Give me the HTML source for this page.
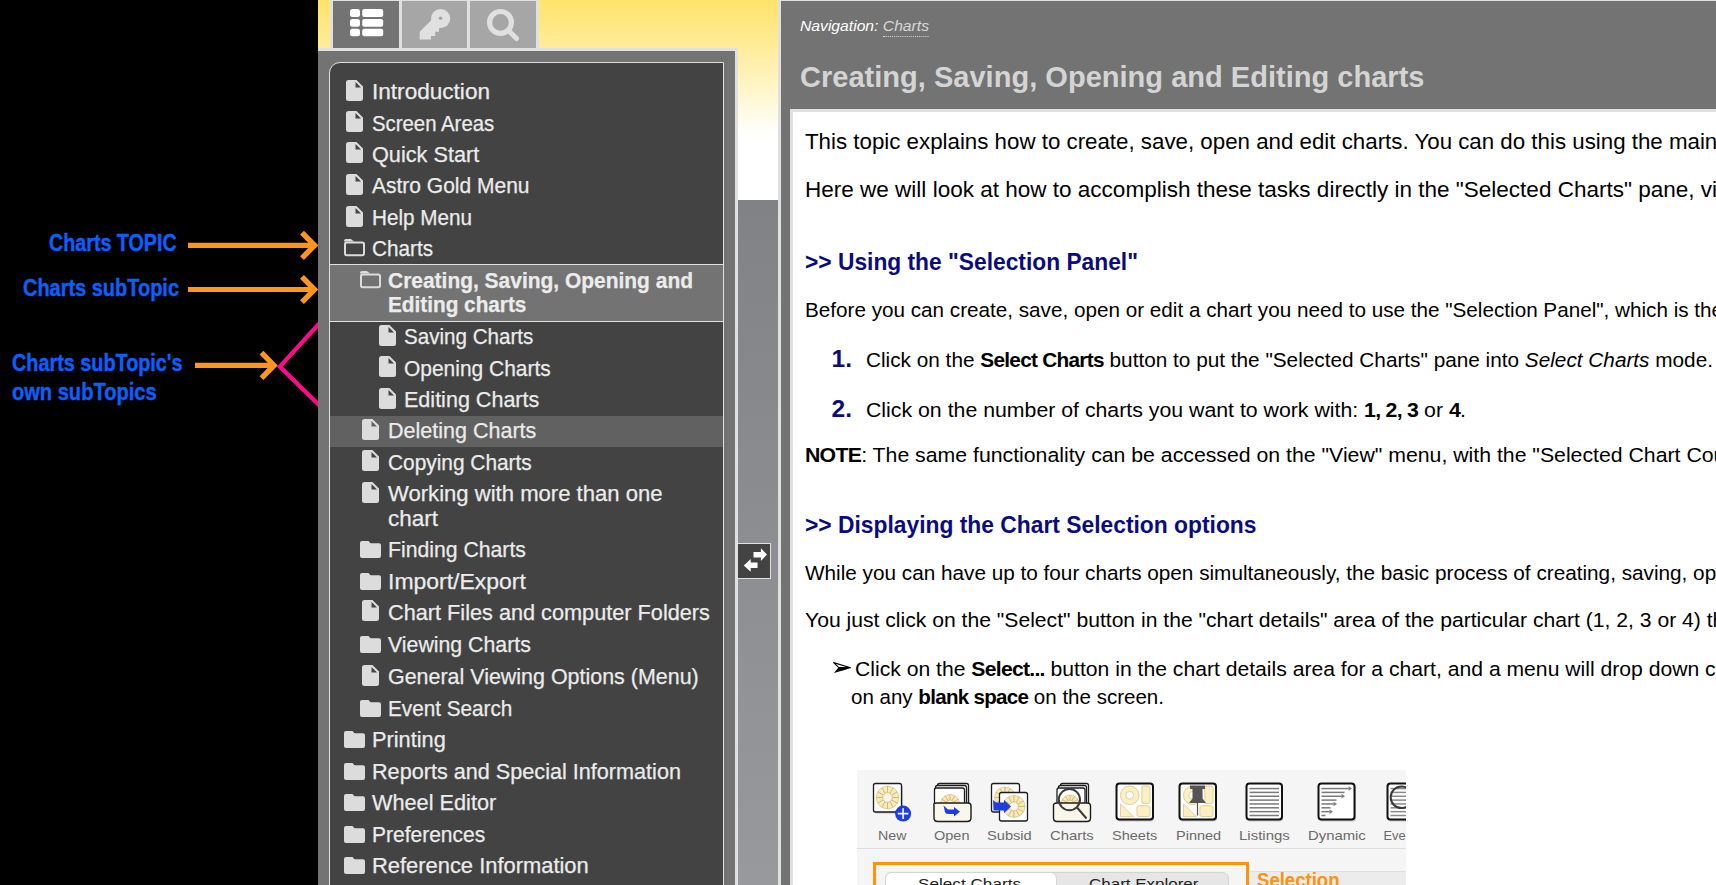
<!DOCTYPE html><html><head><meta charset="utf-8"><style>
html,body{margin:0;padding:0}
body{width:1716px;height:885px;overflow:hidden;background:#000;position:relative;font-family:"Liberation Sans", sans-serif}
.t{position:absolute;white-space:nowrap;transform-origin:0 0}
i.m{display:inline-block;width:0;height:0}
b{letter-spacing:-0.7px}
</style></head><body>

<div style="position:absolute;left:318px;top:0px;width:460px;height:200px;background:linear-gradient(to bottom,#ffe36b 0px,#ffeb94 42px,#fff5c8 88px,#fffdf3 125px,#fff 142px)"></div>
<div style="position:absolute;left:738px;top:200px;width:40px;height:685px;background:linear-gradient(to bottom,#818286,#98999d)"></div>
<div style="position:absolute;left:318px;top:48px;width:417px;height:837px;background:#737373;border-top:3px solid #e0e0e0;border-right:3px solid #e0e0e0"></div>
<div style="position:absolute;left:330px;top:0px;width:209px;height:48px;background:#e0e0e0"></div>
<div style="position:absolute;left:333px;top:1px;width:66px;height:47px;background:#737373"></div>
<div style="position:absolute;left:402px;top:1px;width:65px;height:47px;background:#a6a6a6"></div>
<div style="position:absolute;left:470px;top:1px;width:66px;height:47px;background:#a6a6a6"></div>
<div style="position:absolute;left:329px;top:62px;width:393px;height:830px;background:#434343;border:1px solid #e0e0e0;border-top-left-radius:11px"></div>
<div style="position:absolute;left:330px;top:264px;width:393px;height:56px;background:#737373;border-top:1px solid #e0e0e0;border-bottom:1px solid #e0e0e0"></div>
<div style="position:absolute;left:330px;top:416px;width:393px;height:31px;background:#616161"></div>
<div style="position:absolute;left:778px;top:0px;width:1000px;height:885px;background:#737373;border-left:3px solid #e0e0e0;border-top:1px solid #e0e0e0;box-sizing:border-box"></div>
<div style="position:absolute;left:790px;top:109px;width:1000px;height:800px;background:#fff;border-left:3px solid #e0e0e0;border-top:3px solid #e0e0e0;box-sizing:border-box"></div>
<svg style="position:absolute;left:346px;top:80px" width="17" height="21" viewBox="0 0 17 21"><path d="M2.5 0 H10.5 L17 6.5 V18.5 A2.5 2.5 0 0 1 14.5 21 H2.5 A2.5 2.5 0 0 1 0 18.5 V2.5 A2.5 2.5 0 0 1 2.5 0Z" fill="#dcdcdc"/><path d="M9.5 2 L15 7.5 H9.5Z" fill="#434343"/></svg>
<svg style="position:absolute;left:346px;top:111px" width="17" height="21" viewBox="0 0 17 21"><path d="M2.5 0 H10.5 L17 6.5 V18.5 A2.5 2.5 0 0 1 14.5 21 H2.5 A2.5 2.5 0 0 1 0 18.5 V2.5 A2.5 2.5 0 0 1 2.5 0Z" fill="#dcdcdc"/><path d="M9.5 2 L15 7.5 H9.5Z" fill="#434343"/></svg>
<svg style="position:absolute;left:346px;top:142px" width="17" height="21" viewBox="0 0 17 21"><path d="M2.5 0 H10.5 L17 6.5 V18.5 A2.5 2.5 0 0 1 14.5 21 H2.5 A2.5 2.5 0 0 1 0 18.5 V2.5 A2.5 2.5 0 0 1 2.5 0Z" fill="#dcdcdc"/><path d="M9.5 2 L15 7.5 H9.5Z" fill="#434343"/></svg>
<svg style="position:absolute;left:346px;top:174px" width="17" height="21" viewBox="0 0 17 21"><path d="M2.5 0 H10.5 L17 6.5 V18.5 A2.5 2.5 0 0 1 14.5 21 H2.5 A2.5 2.5 0 0 1 0 18.5 V2.5 A2.5 2.5 0 0 1 2.5 0Z" fill="#dcdcdc"/><path d="M9.5 2 L15 7.5 H9.5Z" fill="#434343"/></svg>
<svg style="position:absolute;left:346px;top:206px" width="17" height="21" viewBox="0 0 17 21"><path d="M2.5 0 H10.5 L17 6.5 V18.5 A2.5 2.5 0 0 1 14.5 21 H2.5 A2.5 2.5 0 0 1 0 18.5 V2.5 A2.5 2.5 0 0 1 2.5 0Z" fill="#dcdcdc"/><path d="M9.5 2 L15 7.5 H9.5Z" fill="#434343"/></svg>
<svg style="position:absolute;left:344px;top:239px" width="21" height="18" viewBox="0 0 21 18"><path d="M0 2.6 V2 Q0 0 2 0 H6.8 L10.2 2.6 Z" fill="#dcdcdc"/><rect x="1" y="3.5" width="19" height="12.8" rx="1.8" fill="none" stroke="#dcdcdc" stroke-width="2"/></svg>
<svg style="position:absolute;left:360px;top:271px" width="21" height="18" viewBox="0 0 21 18"><path d="M0 2.6 V2 Q0 0 2 0 H6.8 L10.2 2.6 Z" fill="#dcdcdc"/><rect x="1" y="3.5" width="19" height="12.8" rx="1.8" fill="none" stroke="#dcdcdc" stroke-width="2"/></svg>
<svg style="position:absolute;left:379px;top:325px" width="17" height="21" viewBox="0 0 17 21"><path d="M2.5 0 H10.5 L17 6.5 V18.5 A2.5 2.5 0 0 1 14.5 21 H2.5 A2.5 2.5 0 0 1 0 18.5 V2.5 A2.5 2.5 0 0 1 2.5 0Z" fill="#dcdcdc"/><path d="M9.5 2 L15 7.5 H9.5Z" fill="#434343"/></svg>
<svg style="position:absolute;left:379px;top:356px" width="17" height="21" viewBox="0 0 17 21"><path d="M2.5 0 H10.5 L17 6.5 V18.5 A2.5 2.5 0 0 1 14.5 21 H2.5 A2.5 2.5 0 0 1 0 18.5 V2.5 A2.5 2.5 0 0 1 2.5 0Z" fill="#dcdcdc"/><path d="M9.5 2 L15 7.5 H9.5Z" fill="#434343"/></svg>
<svg style="position:absolute;left:379px;top:388px" width="17" height="21" viewBox="0 0 17 21"><path d="M2.5 0 H10.5 L17 6.5 V18.5 A2.5 2.5 0 0 1 14.5 21 H2.5 A2.5 2.5 0 0 1 0 18.5 V2.5 A2.5 2.5 0 0 1 2.5 0Z" fill="#dcdcdc"/><path d="M9.5 2 L15 7.5 H9.5Z" fill="#434343"/></svg>
<svg style="position:absolute;left:362px;top:419px" width="17" height="21" viewBox="0 0 17 21"><path d="M2.5 0 H10.5 L17 6.5 V18.5 A2.5 2.5 0 0 1 14.5 21 H2.5 A2.5 2.5 0 0 1 0 18.5 V2.5 A2.5 2.5 0 0 1 2.5 0Z" fill="#dcdcdc"/><path d="M9.5 2 L15 7.5 H9.5Z" fill="#616161"/></svg>
<svg style="position:absolute;left:362px;top:450px" width="17" height="21" viewBox="0 0 17 21"><path d="M2.5 0 H10.5 L17 6.5 V18.5 A2.5 2.5 0 0 1 14.5 21 H2.5 A2.5 2.5 0 0 1 0 18.5 V2.5 A2.5 2.5 0 0 1 2.5 0Z" fill="#dcdcdc"/><path d="M9.5 2 L15 7.5 H9.5Z" fill="#434343"/></svg>
<svg style="position:absolute;left:362px;top:482px" width="17" height="21" viewBox="0 0 17 21"><path d="M2.5 0 H10.5 L17 6.5 V18.5 A2.5 2.5 0 0 1 14.5 21 H2.5 A2.5 2.5 0 0 1 0 18.5 V2.5 A2.5 2.5 0 0 1 2.5 0Z" fill="#dcdcdc"/><path d="M9.5 2 L15 7.5 H9.5Z" fill="#434343"/></svg>
<svg style="position:absolute;left:360px;top:541px" width="21" height="17" viewBox="0 0 21 17"><path d="M2 0 H8.5 L10.5 2.2 H19 A2 2 0 0 1 21 4.2 V15 A2 2 0 0 1 19 17 H2 A2 2 0 0 1 0 15 V2 A2 2 0 0 1 2 0Z" fill="#dcdcdc"/></svg>
<svg style="position:absolute;left:360px;top:573px" width="21" height="17" viewBox="0 0 21 17"><path d="M2 0 H8.5 L10.5 2.2 H19 A2 2 0 0 1 21 4.2 V15 A2 2 0 0 1 19 17 H2 A2 2 0 0 1 0 15 V2 A2 2 0 0 1 2 0Z" fill="#dcdcdc"/></svg>
<svg style="position:absolute;left:362px;top:600px" width="17" height="21" viewBox="0 0 17 21"><path d="M2.5 0 H10.5 L17 6.5 V18.5 A2.5 2.5 0 0 1 14.5 21 H2.5 A2.5 2.5 0 0 1 0 18.5 V2.5 A2.5 2.5 0 0 1 2.5 0Z" fill="#dcdcdc"/><path d="M9.5 2 L15 7.5 H9.5Z" fill="#434343"/></svg>
<svg style="position:absolute;left:360px;top:636px" width="21" height="17" viewBox="0 0 21 17"><path d="M2 0 H8.5 L10.5 2.2 H19 A2 2 0 0 1 21 4.2 V15 A2 2 0 0 1 19 17 H2 A2 2 0 0 1 0 15 V2 A2 2 0 0 1 2 0Z" fill="#dcdcdc"/></svg>
<svg style="position:absolute;left:362px;top:665px" width="17" height="21" viewBox="0 0 17 21"><path d="M2.5 0 H10.5 L17 6.5 V18.5 A2.5 2.5 0 0 1 14.5 21 H2.5 A2.5 2.5 0 0 1 0 18.5 V2.5 A2.5 2.5 0 0 1 2.5 0Z" fill="#dcdcdc"/><path d="M9.5 2 L15 7.5 H9.5Z" fill="#434343"/></svg>
<svg style="position:absolute;left:360px;top:700px" width="21" height="17" viewBox="0 0 21 17"><path d="M2 0 H8.5 L10.5 2.2 H19 A2 2 0 0 1 21 4.2 V15 A2 2 0 0 1 19 17 H2 A2 2 0 0 1 0 15 V2 A2 2 0 0 1 2 0Z" fill="#dcdcdc"/></svg>
<svg style="position:absolute;left:344px;top:731px" width="21" height="17" viewBox="0 0 21 17"><path d="M2 0 H8.5 L10.5 2.2 H19 A2 2 0 0 1 21 4.2 V15 A2 2 0 0 1 19 17 H2 A2 2 0 0 1 0 15 V2 A2 2 0 0 1 2 0Z" fill="#dcdcdc"/></svg>
<svg style="position:absolute;left:344px;top:763px" width="21" height="17" viewBox="0 0 21 17"><path d="M2 0 H8.5 L10.5 2.2 H19 A2 2 0 0 1 21 4.2 V15 A2 2 0 0 1 19 17 H2 A2 2 0 0 1 0 15 V2 A2 2 0 0 1 2 0Z" fill="#dcdcdc"/></svg>
<svg style="position:absolute;left:344px;top:794px" width="21" height="17" viewBox="0 0 21 17"><path d="M2 0 H8.5 L10.5 2.2 H19 A2 2 0 0 1 21 4.2 V15 A2 2 0 0 1 19 17 H2 A2 2 0 0 1 0 15 V2 A2 2 0 0 1 2 0Z" fill="#dcdcdc"/></svg>
<svg style="position:absolute;left:344px;top:826px" width="21" height="17" viewBox="0 0 21 17"><path d="M2 0 H8.5 L10.5 2.2 H19 A2 2 0 0 1 21 4.2 V15 A2 2 0 0 1 19 17 H2 A2 2 0 0 1 0 15 V2 A2 2 0 0 1 2 0Z" fill="#dcdcdc"/></svg>
<svg style="position:absolute;left:344px;top:857px" width="21" height="17" viewBox="0 0 21 17"><path d="M2 0 H8.5 L10.5 2.2 H19 A2 2 0 0 1 21 4.2 V15 A2 2 0 0 1 19 17 H2 A2 2 0 0 1 0 15 V2 A2 2 0 0 1 2 0Z" fill="#dcdcdc"/></svg>
<div class="t" id="n0_0" style="left:372.0px;top:78.30px;font-size:22.5px;line-height:27px;color:#ececec;-webkit-text-stroke:0.25px #ececec;transform:scaleX(1.0036);">Introduction</div>
<div class="t" id="n1_0" style="left:372.0px;top:109.60px;font-size:22.5px;line-height:27px;color:#ececec;-webkit-text-stroke:0.25px #ececec;transform:scaleX(0.9047);">Screen Areas</div>
<div class="t" id="n2_0" style="left:372.0px;top:140.80px;font-size:22.5px;line-height:27px;color:#ececec;-webkit-text-stroke:0.25px #ececec;transform:scaleX(0.9633);">Quick Start</div>
<div class="t" id="n3_0" style="left:372.0px;top:172.30px;font-size:22.5px;line-height:27px;color:#ececec;-webkit-text-stroke:0.25px #ececec;transform:scaleX(0.9329);">Astro Gold Menu</div>
<div class="t" id="n4_0" style="left:372.0px;top:203.90px;font-size:22.5px;line-height:27px;color:#ececec;-webkit-text-stroke:0.25px #ececec;transform:scaleX(0.9190);">Help Menu</div>
<div class="t" id="n5_0" style="left:372.0px;top:235.10px;font-size:22.5px;line-height:27px;color:#ececec;-webkit-text-stroke:0.25px #ececec;transform:scaleX(0.9203);">Charts</div>
<div class="t" id="n6_0" style="left:388.0px;top:267.68px;font-size:22px;line-height:26px;color:#ececec;-webkit-text-stroke:0.25px #ececec;font-weight:bold;transform:scaleX(0.9523);">Creating, Saving, Opening and</div>
<div class="t" id="n6_1" style="left:388.0px;top:291.98px;font-size:22px;line-height:26px;color:#ececec;-webkit-text-stroke:0.25px #ececec;font-weight:bold;transform:scaleX(0.9435);">Editing charts</div>
<div class="t" id="n7_0" style="left:404.0px;top:322.90px;font-size:22.5px;line-height:27px;color:#ececec;-webkit-text-stroke:0.25px #ececec;transform:scaleX(0.9149);">Saving Charts</div>
<div class="t" id="n8_0" style="left:404.0px;top:354.80px;font-size:22.5px;line-height:27px;color:#ececec;-webkit-text-stroke:0.25px #ececec;transform:scaleX(0.9309);">Opening Charts</div>
<div class="t" id="n9_0" style="left:404.0px;top:385.80px;font-size:22.5px;line-height:27px;color:#ececec;-webkit-text-stroke:0.25px #ececec;transform:scaleX(0.9573);">Editing Charts</div>
<div class="t" id="n10_0" style="left:388.0px;top:416.90px;font-size:22.5px;line-height:27px;color:#ececec;-webkit-text-stroke:0.25px #ececec;transform:scaleX(0.9563);">Deleting Charts</div>
<div class="t" id="n11_0" style="left:388.0px;top:448.60px;font-size:22.5px;line-height:27px;color:#ececec;-webkit-text-stroke:0.25px #ececec;transform:scaleX(0.9273);">Copying Charts</div>
<div class="t" id="n12_0" style="left:388.0px;top:480.20px;font-size:22.5px;line-height:27px;color:#ececec;-webkit-text-stroke:0.25px #ececec;transform:scaleX(0.9816);">Working with more than one</div>
<div class="t" id="n12_1" style="left:388.0px;top:505.10px;font-size:22.5px;line-height:27px;color:#ececec;-webkit-text-stroke:0.25px #ececec;">chart</div>
<div class="t" id="n13_0" style="left:388.0px;top:535.70px;font-size:22.5px;line-height:27px;color:#ececec;-webkit-text-stroke:0.25px #ececec;transform:scaleX(0.9424);">Finding Charts</div>
<div class="t" id="n14_0" style="left:388.0px;top:568.00px;font-size:22.5px;line-height:27px;color:#ececec;-webkit-text-stroke:0.25px #ececec;transform:scaleX(1.0211);">Import/Export</div>
<div class="t" id="n15_0" style="left:388.0px;top:598.80px;font-size:22.5px;line-height:27px;color:#ececec;-webkit-text-stroke:0.25px #ececec;transform:scaleX(0.9641);">Chart Files and computer Folders</div>
<div class="t" id="n16_0" style="left:388.0px;top:631.10px;font-size:22.5px;line-height:27px;color:#ececec;-webkit-text-stroke:0.25px #ececec;transform:scaleX(0.9462);">Viewing Charts</div>
<div class="t" id="n17_0" style="left:388.0px;top:662.90px;font-size:22.5px;line-height:27px;color:#ececec;-webkit-text-stroke:0.25px #ececec;transform:scaleX(0.9531);">General Viewing Options (Menu)</div>
<div class="t" id="n18_0" style="left:388.0px;top:694.70px;font-size:22.5px;line-height:27px;color:#ececec;-webkit-text-stroke:0.25px #ececec;transform:scaleX(0.9209);">Event Search</div>
<div class="t" id="n19_0" style="left:372.0px;top:725.70px;font-size:22.5px;line-height:27px;color:#ececec;-webkit-text-stroke:0.25px #ececec;transform:scaleX(0.9673);">Printing</div>
<div class="t" id="n20_0" style="left:372.0px;top:757.50px;font-size:22.5px;line-height:27px;color:#ececec;-webkit-text-stroke:0.25px #ececec;transform:scaleX(0.9613);">Reports and Special Information</div>
<div class="t" id="n21_0" style="left:372.0px;top:788.50px;font-size:22.5px;line-height:27px;color:#ececec;-webkit-text-stroke:0.25px #ececec;transform:scaleX(0.9642);">Wheel Editor</div>
<div class="t" id="n22_0" style="left:372.0px;top:820.50px;font-size:22.5px;line-height:27px;color:#ececec;-webkit-text-stroke:0.25px #ececec;transform:scaleX(0.9331);">Preferences</div>
<div class="t" id="n23_0" style="left:372.0px;top:851.50px;font-size:22.5px;line-height:27px;color:#ececec;-webkit-text-stroke:0.25px #ececec;transform:scaleX(0.9734);">Reference Information</div>
<div class="t" id="navl" style="left:800.0px;top:17.30px;font-size:15px;line-height:18px;font-style:italic;transform:scaleX(1.0453);"><span style="color:#fff">Navigation:</span> <span style="color:#d8d8d8;border-bottom:1px dotted #d8d8d8;padding-bottom:2px">Charts</span></div>
<div class="t" id="h1" style="left:799.5px;top:58.51px;font-size:30px;line-height:36px;color:#d4d4d4;font-weight:bold;transform:scaleX(0.9681);">Creating, Saving, Opening and Editing charts</div>
<div class="t" id="p1" style="left:805.0px;top:127.77px;font-size:22.3px;line-height:27px;color:#000;">This topic explains how to create, save, open and edit charts.<i class=m></i> You can do this using the main Astro Gold toolbar</div>
<div class="t" id="p2" style="left:805.0px;top:176.27px;font-size:22.3px;line-height:27px;color:#000;transform:scaleX(1.0099);">Here we will look at how to accomplish these tasks directly in the "Selected Charts" pane,<i class=m></i> via the toolbar</div>
<div class="t" id="h2a" style="left:805.0px;top:247.01px;font-size:24.5px;line-height:29px;color:#0b0b80;font-weight:bold;transform:scaleX(0.9297);">&gt;&gt; Using the "Selection Panel"</div>
<div class="t" id="p3" style="left:805.0px;top:297.20px;font-size:20.5px;line-height:25px;color:#000;transform:scaleX(1.0086);">Before you can create, save, open or edit a chart you need to use the "Selection Panel", which is<i class=m></i> the area</div>
<div class="t" id="n1" style="left:831.5px;top:343.51px;font-size:24.5px;line-height:29px;color:#0b0b80;font-weight:bold;">1.</div>
<div class="t" id="l1" style="left:866.0px;top:346.90px;font-size:20.5px;line-height:25px;color:#000;transform:scaleX(1.0129);">Click on the <b>Select Charts</b> button to put the "Selected Charts" pane into <i>Select Charts</i> mode.<i class=m></i></div>
<div class="t" id="n2" style="left:831.5px;top:393.71px;font-size:24.5px;line-height:29px;color:#0b0b80;font-weight:bold;">2.</div>
<div class="t" id="l2" style="left:866.0px;top:397.10px;font-size:20.5px;line-height:25px;color:#000;transform:scaleX(1.0384);">Click on the number of charts you want to work with: <b>1, 2, 3</b> or <b>4</b>.<i class=m></i></div>
<div class="t" id="note" style="left:805.0px;top:441.50px;font-size:20.5px;line-height:25px;color:#000;transform:scaleX(1.0368);"><b>NOTE</b>: The same functionality can be accessed on the "View" menu, with the "Selected Chart<i class=m></i> Count" option</div>
<div class="t" id="h2b" style="left:805.0px;top:509.51px;font-size:24.5px;line-height:29px;color:#0b0b80;font-weight:bold;transform:scaleX(0.9316);">&gt;&gt; Displaying the Chart Selection options</div>
<div class="t" id="p4" style="left:805.0px;top:560.20px;font-size:20.5px;line-height:25px;color:#000;transform:scaleX(1.0113);">While you can have up to four charts open simultaneously, the basic process of creating, saving,<i class=m></i> opening</div>
<div class="t" id="p5" style="left:805.0px;top:607.20px;font-size:20.5px;line-height:25px;color:#000;transform:scaleX(1.0305);">You just click on the "Select" button in the "chart details" area of the particular chart (1, 2, 3 or 4)<i class=m></i> that</div>
<div class="t" id="p6" style="left:855.3px;top:655.80px;font-size:20.5px;line-height:25px;color:#000;transform:scaleX(1.0311);">Click on the <b>Select...</b> button in the chart details area for a chart, and a menu will drop down<i class=m></i> containing</div>
<div class="t" id="p7" style="left:851.0px;top:683.80px;font-size:20.5px;line-height:25px;color:#000;transform:scaleX(1.0014);">on any <b>blank space</b> on the screen.<i class=m></i></div>
<div class="t" id="a1" style="left:48.6px;top:228.93px;font-size:23px;line-height:28px;color:#0c60ff;font-weight:bold;-webkit-text-stroke:0.35px #0c60ff;transform:scaleX(0.8564);">Charts TOPIC</div>
<div class="t" id="a2" style="left:22.6px;top:274.13px;font-size:23px;line-height:28px;color:#0c60ff;font-weight:bold;-webkit-text-stroke:0.35px #0c60ff;transform:scaleX(0.8678);">Charts subTopic</div>
<div class="t" id="a3" style="left:12.4px;top:348.73px;font-size:23px;line-height:28px;color:#0c60ff;font-weight:bold;-webkit-text-stroke:0.35px #0c60ff;transform:scaleX(0.8615);">Charts subTopic's</div>
<div class="t" id="a4" style="left:12.4px;top:377.73px;font-size:23px;line-height:28px;color:#0c60ff;font-weight:bold;-webkit-text-stroke:0.35px #0c60ff;transform:scaleX(0.8727);">own subTopics</div>
<div class="t" id="tl_New" style="left:877.6px;top:828.46px;font-size:12.8px;line-height:15px;color:#6a6a6a;z-index:2;transform:scaleX(1.1090);">New</div>
<div class="t" id="tl_Open" style="left:933.7px;top:828.46px;font-size:12.8px;line-height:15px;color:#6a6a6a;z-index:2;transform:scaleX(1.1337);">Open</div>
<div class="t" id="tl_Subsid" style="left:987.3px;top:828.46px;font-size:12.8px;line-height:15px;color:#6a6a6a;z-index:2;transform:scaleX(1.1420);">Subsid</div>
<div class="t" id="tl_Charts" style="left:1050.2px;top:828.46px;font-size:12.8px;line-height:15px;color:#6a6a6a;z-index:2;transform:scaleX(1.1617);">Charts</div>
<div class="t" id="tl_Sheets" style="left:1112.2px;top:828.46px;font-size:12.8px;line-height:15px;color:#6a6a6a;z-index:2;transform:scaleX(1.1344);">Sheets</div>
<div class="t" id="tl_Pinned" style="left:1175.8px;top:828.46px;font-size:12.8px;line-height:15px;color:#6a6a6a;z-index:2;transform:scaleX(1.1340);">Pinned</div>
<div class="t" id="tl_Listings" style="left:1239.2px;top:828.46px;font-size:12.8px;line-height:15px;color:#6a6a6a;z-index:2;transform:scaleX(1.1708);">Listings</div>
<div class="t" id="tl_Dynamic" style="left:1308.2px;top:828.46px;font-size:12.8px;line-height:15px;color:#6a6a6a;z-index:2;transform:scaleX(1.1611);">Dynamic</div>
<div class="t" id="tl_Eve" style="left:1383.5px;top:828.46px;font-size:12.8px;line-height:15px;color:#6a6a6a;z-index:2;clip-path:inset(0 0 0 0);">Events</div>
<div class="t" id="selc" style="left:918.4px;top:875.40px;font-size:15px;line-height:18px;color:#222;z-index:2;transform:scaleX(1.1438);">Select Charts</div>
<div class="t" id="chex" style="left:1088.6px;top:875.40px;font-size:15px;line-height:18px;color:#222;z-index:2;transform:scaleX(1.1313);">Chart Explorer</div>
<div class="t" id="sele" style="left:1256.5px;top:867.22px;font-size:21px;line-height:25px;color:#ff9207;font-weight:bold;z-index:2;transform:scaleX(0.8835);">Selection</div>
<svg style="position:absolute;left:330px;top:0" width="210" height="48" viewBox="330 0 210 48">
<g fill="#ffffff">
<rect x="350" y="9" width="10" height="8" rx="2.5"/><rect x="362.2" y="9" width="21" height="8" rx="2"/>
<rect x="350" y="18.9" width="10" height="7.9" rx="2.5"/><rect x="362.2" y="18.9" width="21" height="7.9" rx="2"/>
<rect x="350" y="28.8" width="10" height="7.4" rx="2.5"/><rect x="362.2" y="28.8" width="21" height="7.4" rx="2"/>
</g>
<g fill="#e0e0e0">
<circle cx="440.6" cy="18.5" r="9.6"/>
<path d="M419.7 31.7 L432.5 19 L443 27.5 L439 28.2 L439 31.7 L435.2 31.7 L435.2 35.9 L431 35.9 L431 39.6 L419.7 39.6 Z"/>
</g>
<circle cx="440.6" cy="18.2" r="1.8" fill="#a6a6a6"/>
<circle cx="500.5" cy="22.4" r="10.9" fill="none" stroke="#e0e0e0" stroke-width="5.2"/>
<path d="M508.5 30.5 L516.5 38.5" stroke="#e0e0e0" stroke-width="5" stroke-linecap="round"/>
</svg>
<svg style="position:absolute;left:0;top:0" width="318" height="885" viewBox="0 0 318 885"><path d="M188 245.4 H313.5" stroke="#fe961e" stroke-width="5.2" fill="none"/><path d="M302.0 232.70000000000002 L314.5 245.4 L302.0 258.1" stroke="#fe961e" stroke-width="5.4" fill="none" stroke-linejoin="miter" stroke-miterlimit="4"/><path d="M188 289.5 H313.5" stroke="#fe961e" stroke-width="5.2" fill="none"/><path d="M302.0 276.8 L314.5 289.5 L302.0 302.2" stroke="#fe961e" stroke-width="5.4" fill="none" stroke-linejoin="miter" stroke-miterlimit="4"/><path d="M195 365.4 H273.0" stroke="#fe961e" stroke-width="5.2" fill="none"/><path d="M261.5 352.7 L274.0 365.4 L261.5 378.09999999999997" stroke="#fe961e" stroke-width="5.4" fill="none" stroke-linejoin="miter" stroke-miterlimit="4"/><path d="M320 322.8 L279.8 366.6 L320 406" stroke="#ff0a8c" stroke-width="4.2" fill="none"/></svg>
<svg style="position:absolute;left:828px;top:655px" width="30" height="25" viewBox="828 655 30 25"><path d="M833.9 672.9 L838.4 667.4 Q845 667.2 850.8 667.7 Q845 670 833.9 672.9Z" fill="#000"/><path d="M833.6 662.6 L850.6 667.7 L838.6 667.4 Z" fill="none" stroke="#000" stroke-width="1.1" stroke-linejoin="round"/></svg>
<div style="position:absolute;left:738px;top:543px;width:32px;height:34px;background:#434343;border:1px solid #e0e0e0;border-left:none"></div>
<svg style="position:absolute;left:738px;top:543px" width="34" height="36" viewBox="738 543 34 36">
<path d="M753.5 551.9 H760.9 V548.3 L767 554.6 L760.9 560.9 V557.6 H753.5 Z" fill="#fff"/>
<path d="M757.5 562.5 H750.7 V559 L743.8 565.4 L750.7 571.8 V568 H757.5 Z" fill="#fff"/>
</svg>
<svg style="position:absolute;left:857px;top:770px" width="549" height="115" viewBox="857 770 549 115"><defs><clipPath id="tbc"><rect x="857" y="770" width="549" height="115"/></clipPath></defs><g clip-path="url(#tbc)"><rect x="857" y="770" width="549" height="115" fill="#f5f5f5"/><rect x="857" y="848" width="549" height="1" fill="#dedede"/><rect x="874" y="784.5" width="29" height="29" rx="3" fill="#000" opacity="0.18"/><rect x="1117" y="784.5" width="37" height="37" rx="3" fill="#000" opacity="0.18"/><rect x="1180" y="784.5" width="37" height="37" rx="3" fill="#000" opacity="0.18"/><rect x="1247" y="784.5" width="36" height="37" rx="3" fill="#000" opacity="0.18"/><rect x="1319" y="784.5" width="37" height="37" rx="3" fill="#000" opacity="0.18"/><rect x="1388" y="784.5" width="37" height="37" rx="3" fill="#000" opacity="0.18"/><rect x="873.5" y="783.5" width="28" height="28.5" rx="2" fill="#fff" stroke="#1c1c1c" stroke-width="1.3"/><circle cx="887.5" cy="797.5" r="11.3" fill="#f8ebb8" stroke="#cdb57a" stroke-width="0.6"/><path d="M892.30 797.50 L898.80 797.50 M891.66 799.90 L897.29 803.15 M889.90 801.66 L893.15 807.29 M887.50 802.30 L887.50 808.80 M885.10 801.66 L881.85 807.29 M883.34 799.90 L877.71 803.15 M882.70 797.50 L876.20 797.50 M883.34 795.10 L877.71 791.85 M885.10 793.34 L881.85 787.71 M887.50 792.70 L887.50 786.20 M889.90 793.34 L893.15 787.71 M891.66 795.10 L897.29 791.85 " stroke="#c0a062" stroke-width="0.7"/><circle cx="887.5" cy="797.5" r="4.8" fill="#faf5e8" stroke="#c8a860" stroke-width="0.6"/><circle cx="903.1" cy="813.6" r="8" fill="#1d3ee0"/><path d="M903.1 808.3 V818.9 M897.8 813.6 H908.4" stroke="#fff" stroke-width="1.6"/><rect x="937.5" y="783.5" width="31" height="28" rx="2" fill="#fff" stroke="#1c1c1c" stroke-width="1.3"/><rect x="935.5" y="785.5" width="31" height="28" rx="2" fill="#fff" stroke="#1c1c1c" stroke-width="1.3"/><rect x="934.5" y="788" width="30" height="26" rx="2" fill="#fff" stroke="#1c1c1c" stroke-width="1.3"/><circle cx="950" cy="804" r="9.5" fill="#f8ebb8" stroke="#cdb57a" stroke-width="0.6"/><path d="M954.00 804.00 L959.50 804.00 M953.46 806.00 L958.23 808.75 M952.00 807.46 L954.75 812.23 M950.00 808.00 L950.00 813.50 M948.00 807.46 L945.25 812.23 M946.54 806.00 L941.77 808.75 M946.00 804.00 L940.50 804.00 M946.54 802.00 L941.77 799.25 M948.00 800.54 L945.25 795.77 M950.00 800.00 L950.00 794.50 M952.00 800.54 L954.75 795.77 M953.46 802.00 L958.23 799.25 " stroke="#c0a062" stroke-width="0.7"/><circle cx="950" cy="804" r="4" fill="#faf5e8" stroke="#c8a860" stroke-width="0.6"/><path d="M934 805 Q933 803 937 803 H968 Q971 803 971 806 V818 Q971 821.5 967 821.5 H938 Q934 821.5 934 818 Z" fill="#faf6ea" stroke="#1c1c1c" stroke-width="1.4"/><path d="M943.5 805.5 L945 812 Q945.5 814 948 814 H954 V816.5 L960 811.8 L954 807 V809.5 H948 Z" fill="#1d3ee0"/><rect x="991.5" y="783.5" width="28" height="28.5" rx="2" fill="#fff" stroke="#1c1c1c" stroke-width="1.3"/><circle cx="1005" cy="797.5" r="10.5" fill="#f8ebb8" stroke="#cdb57a" stroke-width="0.6"/><path d="M1009.50 797.50 L1015.50 797.50 M1008.90 799.75 L1014.09 802.75 M1007.25 801.40 L1010.25 806.59 M1005.00 802.00 L1005.00 808.00 M1002.75 801.40 L999.75 806.59 M1001.10 799.75 L995.91 802.75 M1000.50 797.50 L994.50 797.50 M1001.10 795.25 L995.91 792.25 M1002.75 793.60 L999.75 788.41 M1005.00 793.00 L1005.00 787.00 M1007.25 793.60 L1010.25 788.41 M1008.90 795.25 L1014.09 792.25 " stroke="#c0a062" stroke-width="0.7"/><circle cx="1005" cy="797.5" r="4.5" fill="#faf5e8" stroke="#c8a860" stroke-width="0.6"/><rect x="999.5" y="792.5" width="28" height="28.5" rx="2" fill="#fff" stroke="#1c1c1c" stroke-width="1.3"/><circle cx="1013.9" cy="806.4" r="11" fill="#f8ebb8" stroke="#cdb57a" stroke-width="0.6"/><path d="M1018.40 806.40 L1024.90 806.40 M1017.80 808.65 L1023.43 811.90 M1016.15 810.30 L1019.40 815.93 M1013.90 810.90 L1013.90 817.40 M1011.65 810.30 L1008.40 815.93 M1010.00 808.65 L1004.37 811.90 M1009.40 806.40 L1002.90 806.40 M1010.00 804.15 L1004.37 800.90 M1011.65 802.50 L1008.40 796.87 M1013.90 801.90 L1013.90 795.40 M1016.15 802.50 L1019.40 796.87 M1017.80 804.15 L1023.43 800.90 " stroke="#c0a062" stroke-width="0.7"/><circle cx="1013.9" cy="806.4" r="4.5" fill="#faf5e8" stroke="#c8a860" stroke-width="0.6"/><path d="M993 800 L993.5 810.5 H1004 V813 L1011 806.5 L1004 800 V802.5 H996 Z" fill="#1d3ee0"/><rect x="1060.5" y="783.5" width="28" height="25" rx="2" fill="#fff" stroke="#1c1c1c" stroke-width="1.3"/><rect x="1058.5" y="785.5" width="28" height="25" rx="2" fill="#fff" stroke="#1c1c1c" stroke-width="1.3"/><rect x="1057" y="788" width="28" height="22" rx="2" fill="#fff" stroke="#1c1c1c" stroke-width="1.3"/><circle cx="1070" cy="804" r="9" fill="#f8ebb8" stroke="#cdb57a" stroke-width="0.6"/><path d="M1073.80 804.00 L1079.00 804.00 M1073.29 805.90 L1077.79 808.50 M1071.90 807.29 L1074.50 811.79 M1070.00 807.80 L1070.00 813.00 M1068.10 807.29 L1065.50 811.79 M1066.71 805.90 L1062.21 808.50 M1066.20 804.00 L1061.00 804.00 M1066.71 802.10 L1062.21 799.50 M1068.10 800.71 L1065.50 796.21 M1070.00 800.20 L1070.00 795.00 M1071.90 800.71 L1074.50 796.21 M1073.29 802.10 L1077.79 799.50 " stroke="#c0a062" stroke-width="0.7"/><circle cx="1070" cy="804" r="3.8" fill="#faf5e8" stroke="#c8a860" stroke-width="0.6"/><path d="M1053.5 806 Q1053 803 1057 803 H1087 Q1090.5 803 1090.5 806 V818 Q1090.5 821.5 1087 821.5 H1057 Q1053.5 821.5 1053.5 818 Z" fill="#faf6ea" stroke="#1c1c1c" stroke-width="1.4"/><circle cx="1069.4" cy="799.6" r="10.6" fill="none" stroke="#3a3a3a" stroke-width="2"/><path d="M1077 807.5 L1086.5 818.5" stroke="#3a3a3a" stroke-width="2"/><rect x="1116.5" y="783.5" width="36.5" height="36" rx="3" fill="#fff" stroke="#111" stroke-width="2"/><circle cx="1129.7" cy="795.3" r="6.6" fill="none" stroke="#fcf0c2" stroke-width="5.4"/><circle cx="1129.7" cy="795.3" r="3.9" fill="none" stroke="#d9c588" stroke-width="0.8"/><circle cx="1129.7" cy="795.3" r="9.3" fill="none" stroke="#d9c588" stroke-width="0.8"/><rect x="1141.9" y="786" width="8.1" height="17.4" rx="1" fill="#fcf0c2" stroke="#d9c588" stroke-width="0.8"/><path d="M1120.5 804 V816.7 H1133.5 Z" fill="#fcf0c2" stroke="#d9c588" stroke-width="0.8"/><rect x="1136.9" y="805.7" width="13.1" height="10.8" rx="2" fill="#fcf0c2" stroke="#d9c588" stroke-width="0.8"/><rect x="1179.5" y="783.5" width="36.5" height="36" rx="3" fill="#fff" stroke="#111" stroke-width="2"/><circle cx="1192.7" cy="795.3" r="6.6" fill="none" stroke="#fcf0c2" stroke-width="5.4"/><circle cx="1192.7" cy="795.3" r="3.9" fill="none" stroke="#d9c588" stroke-width="0.8"/><circle cx="1192.7" cy="795.3" r="9.3" fill="none" stroke="#d9c588" stroke-width="0.8"/><rect x="1204.9" y="786" width="8.1" height="17.4" rx="1" fill="#fcf0c2" stroke="#d9c588" stroke-width="0.8"/><path d="M1183.5 804 V816.7 H1196.5 Z" fill="#fcf0c2" stroke="#d9c588" stroke-width="0.8"/><rect x="1199.9" y="805.7" width="13.1" height="10.8" rx="2" fill="#fcf0c2" stroke="#d9c588" stroke-width="0.8"/><path d="M1190 785.5 H1205 V789 H1202.5 V798.5 L1206 803 H1189 L1192.5 798.5 V789 H1190 Z" fill="#555"/><path d="M1197.5 803 V815.5" stroke="#555" stroke-width="1.2"/><rect x="1246.5" y="783.5" width="35.5" height="36" rx="3" fill="#fff" stroke="#111" stroke-width="2"/><rect x="1249.5" y="787.80" width="29.5" height="1.5" fill="#7a7a7a"/><rect x="1249.5" y="791.65" width="29.5" height="1.5" fill="#7a7a7a"/><rect x="1249.5" y="795.50" width="29.5" height="1.5" fill="#7a7a7a"/><rect x="1249.5" y="799.35" width="29.5" height="1.5" fill="#7a7a7a"/><rect x="1249.5" y="803.20" width="29.5" height="1.5" fill="#7a7a7a"/><rect x="1249.5" y="807.05" width="29.5" height="1.5" fill="#7a7a7a"/><rect x="1249.5" y="810.90" width="29.5" height="1.5" fill="#7a7a7a"/><rect x="1249.5" y="814.75" width="29.5" height="1.5" fill="#7a7a7a"/><rect x="1318.5" y="783.5" width="36" height="36" rx="3" fill="#fff" stroke="#111" stroke-width="2"/><rect x="1321.5" y="787.80" width="27" height="1.5" fill="#7a7a7a"/><path d="M1348.5 786.3 L1352.0 788.55 L1348.5 790.8 Z" fill="#7a7a7a"/><rect x="1321.5" y="791.65" width="23" height="1.5" fill="#7a7a7a"/><rect x="1321.5" y="795.50" width="20" height="1.5" fill="#7a7a7a"/><path d="M1341.5 794.0 L1345.0 796.25 L1341.5 798.5 Z" fill="#7a7a7a"/><rect x="1321.5" y="799.35" width="15" height="1.5" fill="#7a7a7a"/><rect x="1321.5" y="803.20" width="12" height="1.5" fill="#7a7a7a"/><path d="M1333.5 801.6999999999999 L1337.0 803.9499999999999 L1333.5 806.1999999999999 Z" fill="#7a7a7a"/><rect x="1321.5" y="807.05" width="9" height="1.5" fill="#7a7a7a"/><rect x="1321.5" y="810.90" width="8" height="1.5" fill="#7a7a7a"/><path d="M1329.5 809.4 L1333.0 811.65 L1329.5 813.9 Z" fill="#7a7a7a"/><rect x="1321.5" y="814.75" width="4" height="1.5" fill="#7a7a7a"/><rect x="1387.5" y="783.5" width="36" height="36" rx="3" fill="#fff" stroke="#111" stroke-width="2"/><rect x="1390.5" y="787.80" width="20" height="1.5" fill="#8a8a8a"/><rect x="1390.5" y="791.65" width="20" height="1.5" fill="#8a8a8a"/><rect x="1390.5" y="795.50" width="20" height="1.5" fill="#8a8a8a"/><rect x="1390.5" y="799.35" width="20" height="1.5" fill="#8a8a8a"/><rect x="1390.5" y="803.20" width="20" height="1.5" fill="#8a8a8a"/><rect x="1390.5" y="807.05" width="20" height="1.5" fill="#8a8a8a"/><rect x="1390.5" y="810.90" width="20" height="1.5" fill="#8a8a8a"/><rect x="1390.5" y="814.75" width="20" height="1.5" fill="#8a8a8a"/><circle cx="1401.5" cy="797.3" r="10.8" fill="none" stroke="#3a3a3a" stroke-width="2"/><rect x="873" y="862" width="373" height="30" fill="none" stroke="#ff9207" stroke-width="3" transform="translate(1.5 1.5)"/><rect x="885.5" y="872.5" width="343" height="30" rx="6" fill="#e6e6e6" stroke="#d4d4d4" stroke-width="1"/><rect x="885.5" y="872.5" width="171" height="30" rx="6" fill="#fff" stroke="#d4d4d4" stroke-width="1"/><rect x="1250.5" y="871" width="156" height="20" fill="#ececec"/><rect x="1250.5" y="871" width="156" height="1" fill="#dedede"/></g></svg>
<div style="position:absolute;left:1406px;top:770px;width:310px;height:115px;background:#fff;z-index:5"></div>
</body></html>
